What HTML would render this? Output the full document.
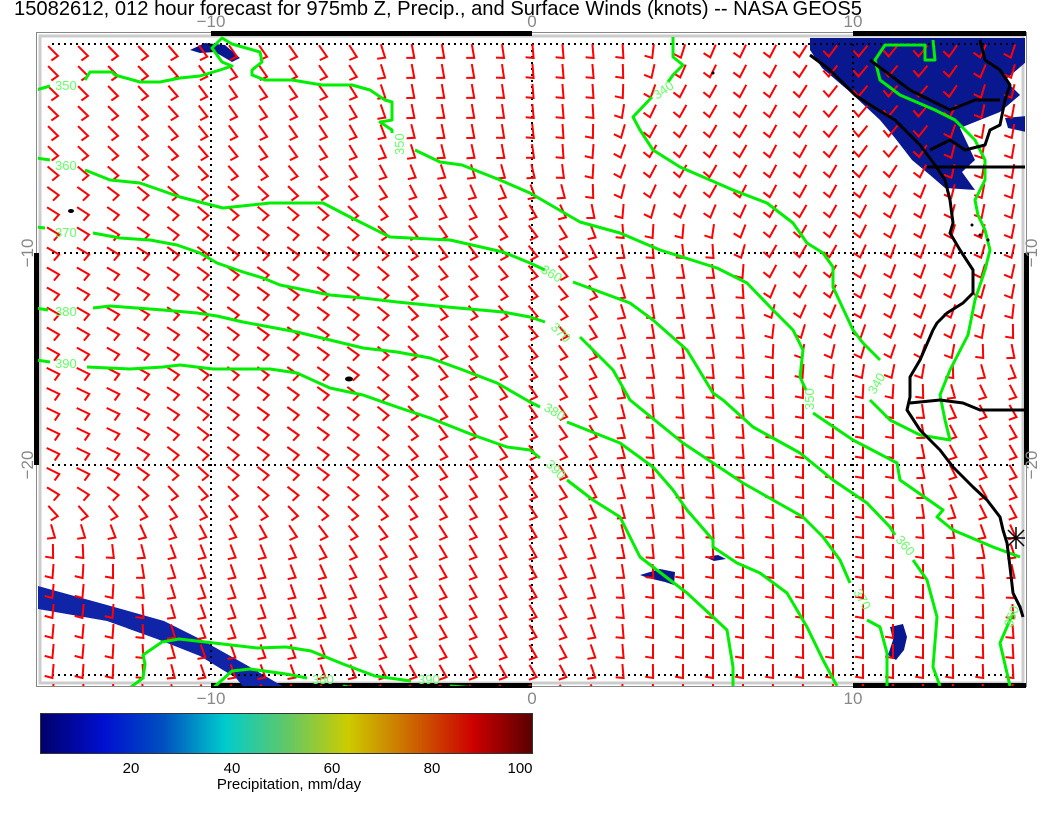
<!DOCTYPE html>
<html><head><meta charset="utf-8">
<style>
html,body{margin:0;padding:0;background:#fff;}
body{width:1056px;height:816px;overflow:hidden;position:relative;font-family:"Liberation Sans",sans-serif;}
svg{position:absolute;left:0;top:0;}
</style></head>
<body>
<svg id="s" width="1056" height="816" viewBox="0 0 1056 816" xmlns="http://www.w3.org/2000/svg">
<defs>
<linearGradient id="cb" x1="0" x2="1" y1="0" y2="0">
<stop offset="0" stop-color="#00006a"/>
<stop offset="0.13" stop-color="#0010d0"/>
<stop offset="0.25" stop-color="#0050c0"/>
<stop offset="0.375" stop-color="#00cccc"/>
<stop offset="0.5" stop-color="#60c868"/>
<stop offset="0.625" stop-color="#cccc00"/>
<stop offset="0.75" stop-color="#cc6a00"/>
<stop offset="0.88" stop-color="#cc0000"/>
<stop offset="1" stop-color="#5a0000"/>
</linearGradient>
<clipPath id="pc"><rect x="38" y="34" width="987" height="652"/></clipPath>
</defs>
<text x="14" y="15" font-size="20" fill="#000" textLength="848" lengthAdjust="spacingAndGlyphs">15082612, 012 hour forecast for 975mb Z, Precip., and Surface Winds (knots) -- NASA GEOS5</text>
<!-- frame -->
<rect x="36.5" y="32.5" width="990" height="654" fill="none" stroke="#888" stroke-width="1"/>
<rect x="40" y="36" width="983" height="647" fill="none" stroke="#ccc" stroke-width="3"/>
<g fill="#000">
<rect x="211" y="31" width="321" height="5"/><rect x="853" y="31" width="173" height="5"/>
<rect x="211" y="683" width="321" height="5"/><rect x="853" y="683" width="173" height="5"/>
<rect x="34" y="253" width="5" height="212"/><rect x="1024" y="253" width="5" height="212"/>
</g>
<g font-size="17" fill="#888" text-anchor="middle">
<text x="211" y="27">−10</text><text x="532" y="27">0</text><text x="853" y="27">10</text>
<text x="211" y="704">−10</text><text x="532" y="704">0</text><text x="853" y="704">10</text>
<text transform="translate(33,253) rotate(-90)">−10</text><text transform="translate(33,465) rotate(-90)">−20</text>
<text transform="translate(1037,253) rotate(-90)">−10</text><text transform="translate(1037,465) rotate(-90)">−20</text>
</g>
<g clip-path="url(#pc)">
<!-- precip -->
<g fill="#0a1890">
<path d="M38,586 L107,605 L164,621 L200,639 L250,667 L289,690 L246,690 L236,678 L200,656 L157,639 L107,621 L38,609 Z" fill="#1024a8"/>
<path d="M810,38 L1026,38 L1026,62 L1005,80 L1020,95 L1000,112 L975,122 L960,128 L968,145 L975,160 L962,172 L975,190 L945,188 L930,175 L912,160 L895,138 L880,120 L850,92 L822,68 L810,50 Z"/>
<path d="M1005,118 L1026,116 L1026,132 L1008,128 Z"/>
<path d="M190,50 L205,43 L225,45 L240,58 L232,62 L215,52 L200,53 Z"/>
<path d="M640,575 L660,569 L675,572 L674,585 L665,582 L648,578 Z"/>
<path d="M705,557 L718,555 L726,559 L714,561 Z"/>
<path d="M890,627 L903,624 L907,637 L904,650 L896,660 L888,655 L893,640 Z"/>
</g>
<!-- grid -->
<g stroke="#000" stroke-width="2" stroke-dasharray="2,4" fill="none">
<line x1="52" y1="44" x2="1015" y2="44"/><line x1="52" y1="675" x2="1015" y2="675"/>
<line x1="52" y1="253" x2="1015" y2="253"/><line x1="52" y1="465" x2="1015" y2="465"/>
<line x1="211" y1="44" x2="211" y2="675"/><line x1="532" y1="44" x2="532" y2="675"/><line x1="853" y1="44" x2="853" y2="675"/>
</g>
<g id="barbs" stroke="#ff0000" stroke-width="2" fill="none"></g>
<!-- contours -->
<g stroke="#00ee00" stroke-width="3" fill="none" stroke-linejoin="round">
<polyline points="36,90 50,86"/>
<polyline points="85,80 90,72 112,72 115,75 140,82 160,82 180,78 200,76 220,70 232,66 222,62 212,48 222,38 232,44 260,52 262,62 252,70 252,75 265,80 292,80 322,85 352,85 370,90 385,100 392,102 392,120 380,122 392,130 392,133"/>
<polyline points="415,150 440,162 462,165 500,180 530,193 580,222 620,233 660,250 717,268 747,283 773,310 793,330 803,350 800,377 806,390"/>
<polyline points="813,413 853,440 897,463 900,480 943,510 937,517 953,530 993,547 1020,557"/>
<polyline points="1013,613 1000,643 1010,686"/>
<polyline points="673,37 673,57 683,65 673,75 668,82"/>
<polyline points="652,97 633,117 640,130 653,150 680,167 710,180 733,190 767,203 793,223 807,243 823,253 833,267 833,287 853,330 863,343 880,360"/>
<polyline points="870,400 890,420 920,435 950,440 945,420 940,395 950,370 968,335 975,300 985,270 990,250 985,230 978,215 975,200 985,180 985,160 975,140 955,120 935,110 900,95 880,80 875,60 885,45 925,45 925,60 935,60 933,40"/>
<polyline points="36,158 50,160"/>
<polyline points="85,170 110,180 140,183 180,197 223,208 270,203 323,203 350,217 390,237 450,240 503,252 530,263 545,270"/>
<polyline points="573,282 630,303 653,320 687,350 713,393 723,400 753,427 800,453 833,480 867,503 890,527 895,535"/>
<polyline points="913,560 927,580 937,617 933,667 940,686"/>
<polyline points="36,227 45,228"/>
<polyline points="93,233 120,238 150,240 177,245 200,253 217,263 243,272 263,278 280,285 330,295 363,298 397,302 447,307 503,312 530,317 545,322"/>
<polyline points="580,337 613,370 630,400 683,443 713,463 743,483 773,500 803,517 823,537 840,560 850,583"/>
<polyline points="867,620 880,627 887,653 887,686"/>
<polyline points="36,308 48,310"/>
<polyline points="93,308 110,306 163,310 197,313 217,316 243,322 297,332 330,340 363,348 397,352 430,358 463,370 497,383 530,402 540,407"/>
<polyline points="567,422 620,443 653,467 673,490 687,510 713,540 713,547 737,563 760,573 787,593 807,627 823,660 837,686"/>
<polyline points="36,360 50,362"/>
<polyline points="87,367 130,369 163,367 180,365 213,369 270,369 297,373 330,388 363,395 397,407 430,418 473,435 507,447 530,450 540,458"/>
<polyline points="567,480 593,500 620,517 640,557 653,567 687,593 713,617 727,630 733,667 733,686"/>
<polyline points="127,690 143,678 145,664 143,655 162,642 179,639 214,643 257,648 286,647 311,651 343,664 375,676 411,681"/>
<polyline points="450,686 477,688"/>
<polyline points="211,690 232,671 250,669 286,674 307,678"/>
<polyline points="343,686 354,688"/>
</g>
<g font-size="13" fill="#66ff66">
<text x="55" y="90">350</text><text x="55" y="170">360</text><text x="55" y="237">370</text><text x="55" y="316">380</text><text x="55" y="368">390</text>
<text transform="translate(404,155) rotate(-90)">350</text>
<text transform="translate(657,100) rotate(-35)">340</text>
<text transform="translate(540,272) rotate(30)">360</text>
<text transform="translate(550,328) rotate(45)">370</text>
<text transform="translate(543,410) rotate(30)">380</text>
<text transform="translate(545,465) rotate(45)">390</text>
<text transform="translate(814,410) rotate(-90)">350</text>
<text transform="translate(875,395) rotate(-60)">340</text>
<text transform="translate(895,540) rotate(50)">360</text>
<text transform="translate(853,592) rotate(60)">370</text>
<text transform="translate(1012,628) rotate(-70)">350</text>
<text x="312" y="684">380</text><text x="418" y="684">390</text>
</g>
<!-- coast -->
<g stroke="#000" stroke-width="3" fill="none" stroke-linejoin="round">
<polyline points="810,55 830,70 845,85 855,95 875,108 895,120 910,135 920,145 935,165 945,180 950,200 953,223 950,233 960,250 973,270 973,293 963,303 947,313 937,323 933,330 920,360 910,377 910,397 907,410 920,430 940,450 953,467 973,487 987,500 1000,517 1003,530 1007,543 1010,567 1013,593 1020,607 1023,617"/>
<polyline points="910,403 940,400 963,403 980,410 1026,410"/>
<polyline points="927,167 1026,167"/>
<polyline points="930,150 950,140 965,150 985,145 990,130 1000,125 1005,100 1010,85 1000,70 985,60 980,40"/>
<polyline points="870,60 890,75 910,90 930,100 950,110 975,100 1000,100"/>
</g>
<g fill="#000">
<ellipse cx="71" cy="211" rx="3" ry="2"/><ellipse cx="349" cy="379" rx="4" ry="2.5"/><circle cx="713" cy="73" r="1.5"/>
<circle cx="972" cy="225" r="1.5"/><circle cx="980" cy="235" r="1.5"/><circle cx="988" cy="240" r="1.5"/>
</g>
<g stroke="#000" stroke-width="1.5"><line x1="1005" y1="538" x2="1027" y2="538"/><line x1="1016" y1="527" x2="1016" y2="549"/><line x1="1008" y1="530" x2="1024" y2="546"/><line x1="1024" y1="530" x2="1008" y2="546"/></g>
</g>
<!-- colorbar -->
<rect x="40.5" y="713.5" width="492" height="40" fill="url(#cb)" stroke="#333" stroke-width="1"/>
<g font-size="15" fill="#000" text-anchor="middle">
<text x="131" y="773">20</text><text x="232" y="773">40</text><text x="332" y="773">60</text><text x="432" y="773">80</text><text x="520" y="773">100</text>
<text x="289" y="789">Precipitation, mm/day</text>
</g>
</svg>
<script>
(function(){
var A=[[60,60,45],[300,60,55],[450,60,80],[560,60,85],[700,150,120],[800,250,120],[900,300,110],[60,300,30],[300,300,35],[530,300,50],[700,300,80],[60,420,25],[300,420,35],[530,430,55],[700,430,85],[850,450,90],[60,620,95],[250,620,70],[500,640,60],[700,640,90],[900,600,90],[1000,450,60],[1000,150,100],[900,100,130]];
function ang(x,y){var sw=0,s=0;for(var i=0;i<A.length;i++){var dx=x-A[i][0],dy=y-A[i][1],d=dx*dx+dy*dy+1,w=1/(d*d);sw+=w;s+=w*A[i][2];}return s/sw;}
var g=document.getElementById('barbs'),out='';
for(var j=0;j<33;j++){for(var i=0;i<33;i++){
var x=53+i*30,y=51+j*20;var a=ang(x,y)*Math.PI/180;
var ux=Math.cos(a),uy=Math.sin(a);
var x1=x-ux*7,y1=y-uy*7,x2=x+ux*7,y2=y+uy*7;
var b=a+100*Math.PI/180;var x3=x2+Math.cos(b)*8,y3=y2+Math.sin(b)*8;
out+='<polyline points="'+x1.toFixed(1)+','+y1.toFixed(1)+' '+x2.toFixed(1)+','+y2.toFixed(1)+' '+x3.toFixed(1)+','+y3.toFixed(1)+'"/>';
}}
g.innerHTML=out;
})();
</script>
</body></html>
